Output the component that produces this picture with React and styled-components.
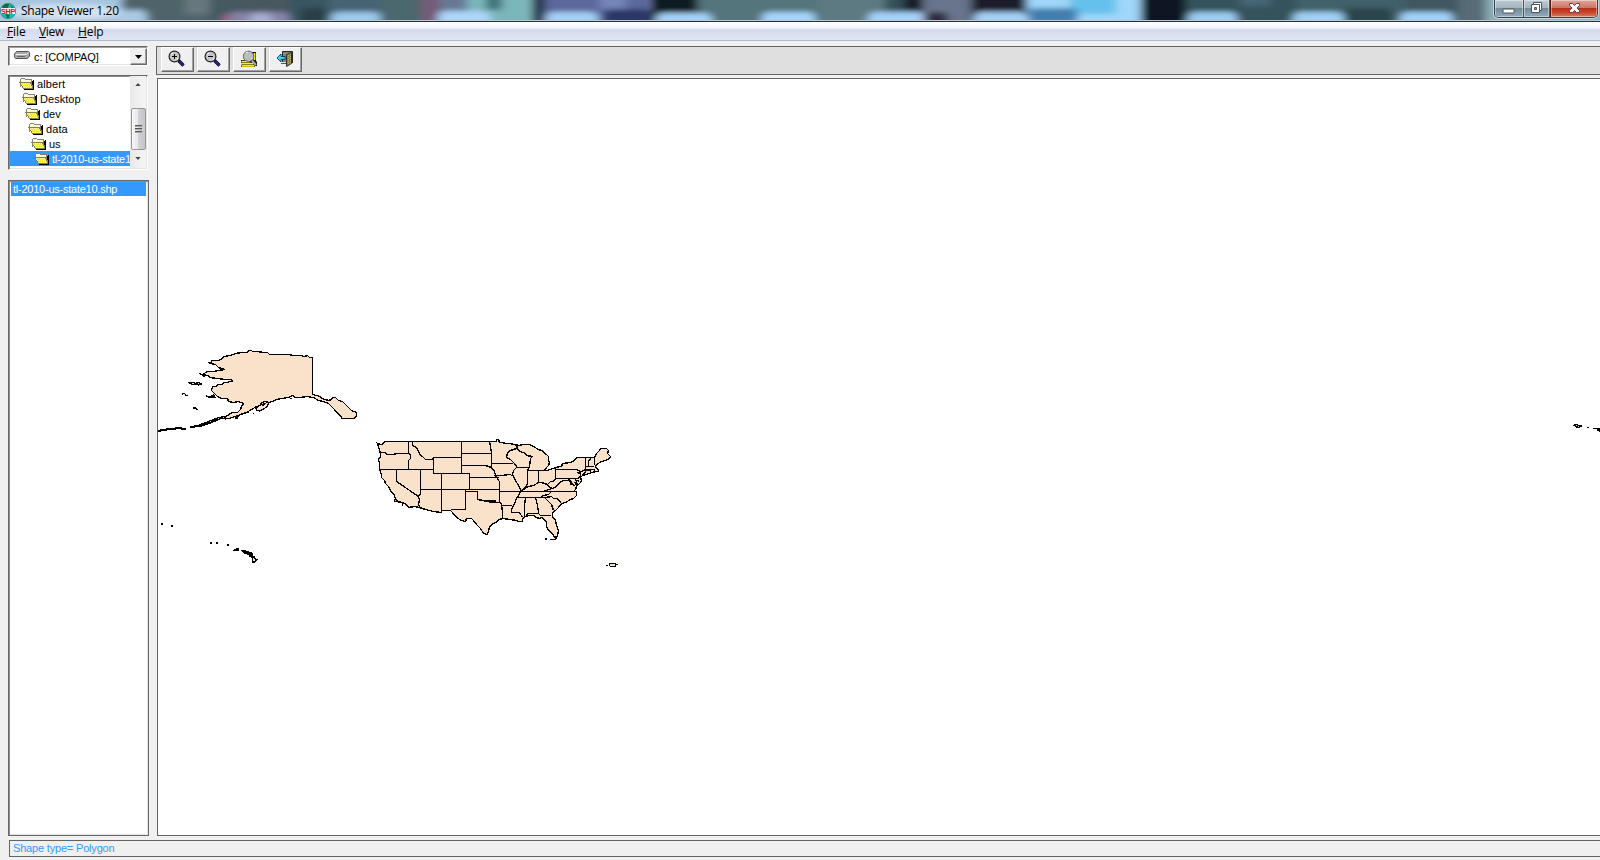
import React from "react";
import styled, { createGlobalStyle, css } from "styled-components";

const Global = createGlobalStyle`
  html, body { margin: 0; padding: 0; overflow: hidden; }
  * { box-sizing: border-box; }
`;

const Window = styled.div`
  width: 1600px;
  height: 860px;
  display: flex;
  flex-direction: column;
  overflow: hidden;
  background: #f0f0f0;
  color: #000;
  font-family: "Liberation Sans", Arial, sans-serif;
  font-size: 11px;
`;

const TitleBar = styled.header`
  position: relative;
  display: flex;
  height: 22px;
  flex: none;
  border-bottom: 1px solid #2c3038;
  box-shadow: inset 0 -1px #b9c8d6;
  background: #b9c8d6;
  overflow: hidden;
`;

const Glass = styled.svg`
  position: absolute;
  inset: 0;
  width: 1600px;
  height: 20px;
`;

const Caption = styled.div`
  position: relative;
  display: flex;
  flex: 1;
  gap: 5px;
  height: 21px;
  font: 12px/21px "Open Sans", "Noto Sans", sans-serif;
  letter-spacing: ${(p) => p.$spacing};
`;

const AppIcon = styled.svg`
  display: block;
  width: 16px;
  height: 16px;
  margin-top: 3px;
`;

const WindowControls = styled.div`
  position: relative;
  display: flex;
  width: 104px;
  height: 18px;
  margin-right: 2px;
  border: 1px solid #34404c;
  border-top: 0;
  border-radius: 0 0 5px 5px;
  box-shadow: 0 0 0 1px rgba(255, 255, 255, 0.5);
  overflow: hidden;
`;

const ControlButton = styled.button`
  display: flex;
  width: ${(p) => p.$width}px;
  height: 17px;
  padding: 0;
  align-items: center;
  justify-content: center;
  border: 0;
  border-right: 1px solid #4c5a68;
  box-shadow: inset 0 0 0 1px rgba(255, 255, 255, 0.4);
  background: linear-gradient(#bccad2 0, #a5b4bf 45%, #768b9a 50%, #93abbd 100%);
  svg { margin-top: -1px; }
  ${(p) =>
    p.$close &&
    css`
      border-right: 0;
      border-left: 1px solid #5a1712;
      background: linear-gradient(#dfa79c 0, #cd7668 45%, #b83018 50%, #c9482f 75%, #d98263 100%);
    `}
`;

const MenuBar = styled.nav`
  display: flex;
  flex: none;
  height: 19px;
  padding-left: 7px;
  border-bottom: 1px solid #b2b9cd;
  background: linear-gradient(#fff 0, #f1f4f9 6px, #e7ebf4 7px, #d4daec 7px, #dfe4f5 18px);
  font: 12px/19px "Open Sans", "Noto Sans", sans-serif;
`;

const MenuItem = styled.span`
  width: ${(p) => p.$width}px;
  letter-spacing: ${(p) => p.$spacing || 0}px;
  white-space: nowrap;
  &::first-letter { text-decoration: underline; }
`;

const Body = styled.div`
  display: flex;
  flex: none;
  height: 795px;
  padding-top: 5px;
`;

const Sidebar = styled.aside`
  display: flex;
  flex-direction: column;
  flex: none;
  width: 156px;
  padding-left: 8px;
`;

const DriveSelect = styled.div`
  display: flex;
  width: 140px;
  height: 20px;
  margin-bottom: 9px;
  background: #fff;
  border: 1px solid;
  border-color: #696969 #fff #fff #696969;
  box-shadow: inset 1px 1px #a0a0a0, inset -1px -1px #e3e3e3;
`;

const DriveLabel = styled.div`
  display: flex;
  flex: 1;
  align-items: center;
  gap: 4px;
  padding: 1px 0 0 5px;
  letter-spacing: -0.1px;
  white-space: pre;
  svg { margin-top: -3px; }
`;

const DropArrow = styled.button`
  flex: none;
  width: 17px;
  height: 17px;
  margin-top: 1px;
  padding: 0;
  border: 1px solid;
  border-color: #f4f4f4 #696969 #696969 #f4f4f4;
  box-shadow: inset -1px -1px #a0a0a0;
  background: #f0f0f0;
  svg { display: block; margin: 0 0 0 4px; }
`;

const SunkenBox = styled.div`
  display: flex;
  width: ${(p) => (p.$framed ? 141 : 140)}px;
  height: ${(p) => p.$height}px;
  margin-bottom: ${(p) => p.$gap || 0}px;
  padding: 0 1px 1px;
  background: #fff;
  border: 1px solid;
  border-color: ${(p) => (p.$framed ? "#696969" : "#696969 #fff #fff #696969")};
  box-shadow: inset 1px 1px #8c8c8c, inset -1px -1px #e3e3e3;
`;

const FolderList = styled.div`
  display: flex;
  flex-direction: column;
  flex: 1;
  min-width: 0;
  overflow: hidden;
`;

const FolderRow = styled.div`
  display: flex;
  flex: none;
  height: 15px;
  line-height: 16px;
  gap: 2px;
  padding-left: ${(p) => p.$indent}px;
  white-space: nowrap;
  letter-spacing: ${(p) => p.$spacing || 0}px;
  background: ${(p) => (p.$selected ? "#3399ff" : "transparent")};
  color: ${(p) => (p.$selected ? "#fff" : "#000")};
  svg { flex: none; margin-top: 1px; }
`;

const ScrollBar = styled.div`
  display: flex;
  flex-direction: column;
  align-items: center;
  width: 16px;
  background: linear-gradient(90deg, #e9e9e9, #f5f5f5);
`;

const ScrollArrow = styled.div`
  display: flex;
  align-items: center;
  justify-content: center;
  height: 17px;
`;

const ScrollThumb = styled.div`
  display: flex;
  flex-direction: column;
  align-items: center;
  justify-content: center;
  gap: 1px;
  width: 15px;
  height: 42px;
  margin-top: 15px;
  border: 1px solid #989898;
  border-radius: 2px;
  background: linear-gradient(90deg, #f5f5f5 0, #e9e9eb 45%, #d2d2d5 50%, #c4c4c8 100%);
`;

const Grip = styled.i`
  width: 7px;
  height: 2px;
  background: linear-gradient(#555 50%, #aaa 50%);
`;

const FileRow = styled.div`
  flex: 1;
  height: 14px;
  margin: 1px;
  line-height: 13px;
  padding-left: 1px;
  border: 1px dotted #c9702a;
  background: #3399ff;
  color: #fff;
  white-space: nowrap;
  letter-spacing: -0.24px;
`;

const Main = styled.main`
  display: flex;
  flex: 1;
  flex-direction: column;
  min-width: 0;
`;

const Toolbar = styled.div`
  display: flex;
  flex: none;
  gap: 3px;
  height: 29px;
  margin-bottom: 3px;
  padding-left: 4px;
  border: 1px solid #646464;
  border-right: 0;
  background: #dfdfdf;
`;

const ToolButton = styled.button`
  width: 33px;
  height: 25px;
  padding: 0;
  border: 1px solid;
  border-color: #fff #696969 #696969 #fff;
  box-shadow: inset -1px -1px #a0a0a0;
  background: #f0f0f0;
  svg { display: block; margin: -2px 0 0 6px; }
`;

const MapView = styled.section`
  flex: none;
  height: 758px;
  margin-left: 1px;
  border: 1px solid #646464;
  border-right: 0;
  background: #fff;
`;

const MapSvg = styled.svg`
  display: block;
  width: 1442px;
  height: 756px;
  shape-rendering: crispEdges;
`;

const StatusBar = styled.footer`
  flex: none;
  height: 17px;
  margin: 4px 0 0 9px;
  padding-left: 3px;
  border: 1px solid #646464;
  border-right: 0;
  color: #3399ff;
  line-height: 14px;
  letter-spacing: -0.18px;
`;

/* Blurred desktop showing through the glass: x, y, width, height, colour */
const glassPatches = [
  [-20, -6, 150, 40, "#a4c4e0"], [122, -6, 90, 40, "#50646b"], [115, 10, 32, 24, "#a9c9e4"],
  [185, -6, 30, 20, "#66787d"], [210, -6, 120, 40, "#465860"], [228, 12, 62, 22, "#8583a8"],
  [222, 14, 12, 20, "#936b88"], [250, 13, 22, 20, "#a9aed2"], [290, -6, 40, 40, "#385460"],
  [300, 8, 28, 26, "#2c4048"], [328, -6, 55, 40, "#456474"], [331, 12, 50, 22, "#9cc9ec"],
  [380, -6, 42, 40, "#4c686e"], [421, -6, 20, 40, "#745b78"], [440, -6, 28, 40, "#687894"],
  [467, -6, 64, 40, "#7ab6bb"], [438, 11, 52, 22, "#acd6fa"], [486, -6, 16, 16, "#3e727a"],
  [532, -6, 13, 40, "#203647"], [545, -6, 105, 40, "#5c689c"], [600, -6, 26, 16, "#7485b8"],
  [603, 9, 48, 24, "#2a3768"], [546, 12, 52, 22, "#a4d0f5"], [651, -6, 47, 40, "#101a24"],
  [698, -6, 120, 40, "#54757b"], [656, 13, 56, 22, "#a4d2f8"], [818, -6, 70, 40, "#5d7981"],
  [762, 12, 53, 22, "#a6d4fb"], [885, -6, 20, 40, "#345058"], [868, 12, 54, 22, "#a4d2fa"],
  [904, -6, 22, 18, "#181f28"], [923, -6, 48, 40, "#68748c"], [926, 12, 22, 22, "#2e2c3a"],
  [971, -6, 56, 40, "#1b1d29"], [974, 12, 53, 22, "#a4d0f5"], [1027, -6, 113, 40, "#9fd7fa"],
  [1070, -6, 46, 20, "#65c1ec"], [1028, 8, 50, 16, "#427eae"], [1141, -6, 46, 40, "#0e1821"],
  [1186, -6, 110, 40, "#35535b"], [1240, -6, 30, 12, "#466676"], [1188, 12, 49, 22, "#9ccdf2"],
  [1296, -6, 110, 40, "#40606a"], [1343, 8, 50, 26, "#2b454c"], [1293, 12, 51, 22, "#a0d0f5"],
  [1405, -6, 56, 40, "#405660"], [1400, 12, 53, 22, "#a0d1f7"], [1458, -6, 35, 40, "#586c77"],
  [1486, -6, 130, 40, "#90b0b8"],
];

const shift = (pts, dx) =>
  pts.trim().split(/\s+/).map((n, i) => (i % 2 ? n : Number(n) + dx)).join(" ");

/* Moves each coordinate to the centre of its screen pixel (three units wide) */
const snap = (d) => d.replace(/\d+/g, (n) => Math.floor(Number(n) / 3) * 3 + 1.5);

const EAST = 375;

const mainland =
  "M38 40 46 44 52 44 55 37 60 34 393 34 394 29 400 29 402 36 " +
  shift(`35 38 50 40 60 40 70 43 88 46 97 42 105 42 118 44 130 50 145 57 155 62 168 72 175 78
    175 90 178 97 175 105 170 112 167 118 160 120 170 121 180 118 197 113 215 110 217 99
    240 97 248 94 255 88 258 83 285 82 312 82 320 70 328 62 330 54 350 54 355 60 353 70
    361 78 358 86 345 90 333 95 320 103 315 108 318 115 325 117 326 125 318 124 305 127
    290 133 278 136 272 143 275 150 270 158 262 165 258 168 256 178 250 183 260 184
    259 195 250 205 240 207 225 216 215 220 205 232 195 240 188 248 187 258 195 270
    198 285 205 300 202 318 193 322 188 310 175 302 170 288 168 278 165 270 155 262
    148 266 140 262 130 255 115 255 105 258 98 264 97 275 85 275 78 270 60 268 38 265
    28 268 15 278 5 284`, EAST) +
  ` 372 293 368 312 355 310 345 295 333 283 325 270 318 265 303 266 300 274 288 272 275 262
    262 247 255 240 229 240 229 247 205 244 180 237 162 232 148 230 130 232 125 224
    118 220 100 215 90 208 88 195 75 180 70 170 60 160 58 150 50 143 48 132 42 118
    43 100 40 88 46 80 47 70 42 60 40 50Z`;

const westBorders = [
  "47 67 60 68 65 73 85 73 95 70 133 70", "131 34 131 70 137 73 135 84 131 90 131 118",
  "42 118 205 118", "143 34 143 46 153 52 160 65 165 75 173 78 180 87 203 87 205 82",
  "205 82 289 82", "205 82 205 130 313 130", "289 34 289 130", "289 70 378 70",
  "289 106 360 106 370 109 380 112", "313 130 313 178", "313 142 396 142",
  "94 118 94 154 160 200", "166 118 166 178 166 190 160 200 162 210 160 220 163 232",
  "229 130 229 240", "166 178 403 178", "301 178 301 238 258 238",
  "301 184 337 184 337 208 355 210 365 214 385 217 403 216",
  "373 34 375 50 378 70 380 100 380 112 388 125 392 137 400 150 403 155 403 216",
];

const eastBorders = [
  "5 100 70 100", "13 136 35 136 60 134 68 138", "0 142 28 142", "0 178 28 178",
  "28 184 85 184", "28 216 35 220 35 226 67 226", "35 226 38 245 38 265",
  "82 46 80 55 60 60 52 68 50 82 62 88 72 100 80 108 80 112 70 120 66 132 75 150 85 165 90 178 92 184 85 195 78 205 72 220 65 238 65 248 88 248 98 262",
  "80 111 118 111", "80 55 92 65 106 70 110 76 126 78 120 85 118 110 113 120 113 160 105 172 92 184",
  "113 121 160 121", "145 121 145 158", "100 177 115 168 130 165 145 158 155 157 172 162 180 155 190 153 195 145 197 113",
  "197 118 260 118 270 125 272 137 265 146 197 146", "172 162 175 170 188 176 200 168 212 155 222 150 235 152 245 158 252 168",
  "85 184 160 184 175 178 188 176", "160 184 257 184", "80 202 165 202",
  "150 202 160 195 175 193 185 184", "105 202 103 230 103 260", "137 202 142 225 145 245 145 250",
  "110 260 112 250 145 250 150 255 183 256", "162 202 175 213 185 224 190 240",
  "165 202 185 200 190 205 200 205 215 218", "285 82 287 95 286 125 278 135",
  "300 84 295 95 295 108", "312 82 314 105", "286 110 312 108", "286 121 312 118 312 126",
  "235 146 245 158 240 165", "257 146 262 165", "262 126 272 130",
];

const alaska = `M174 67 183 66 183 62 206 60 218 56 221 48 240 45 255 41 275 38 290 37 297 32 303 32
  306 35 322 35 340 38 352 38 357 43 400 44 415 44 430 47 450 47 462 49 473 47 479 52 487 52
  487 164 500 166 510 168 514 174 526 178 534 182 545 179 548 173 556 173 566 181 576 183 585 192
  598 204 603 210 618 218 619 227 612 235 575 235 574 228 560 218 553 209 545 199 534 190 520 184
  505 180 490 172 470 168 450 171 435 171 428 167 415 172 395 174 380 178 368 184 355 188 340 190
  330 195 318 200 305 208 290 217 270 222 255 228 235 235 222 236 210 235 200 240 185 247 165 252
  150 258 140 259 150 252 175 244 205 233 225 228 248 218 262 216 272 207 275 198 280 190 265 185
  250 188 235 184 233 175 215 175 203 169 195 162 183 150 188 140 200 138 203 133 217 132 220 128
  232 128 238 125 247 125 247 121 240 118 225 119 200 115 180 113 172 106 157 103 172 95 190 95
  205 90 222 88 205 82 195 74 180 70Z`;

const alaskaIslands = [
  "M113 127h18l4 3 12-2 8 4-9 3-10-3-9 2-5-4z", "M97 162l7-2 3 6h6", "M130 204h8l4 5h3",
  "M167 168l15 2 10-5 3 6-15 1-13-3", "M148 101l12 5 3 5", "M420 176h5",
  "M318 205l7-7 15-6 10-7 5 5-3 10-12 7-12 6-8-3z", "M330 193l12-9 12 2M336 198l12-9",
  "M296 213v5M308 221h4M252 230h16M255 234h10M223 228l5 11",
];

const aleutians = "M24 272h8l2-3h14l2-2h25l2-2h16l2 1h12M120 262l12-1 3-2 12-1 6-4 8 2 5-6 9-3 6 2 7-6 15-5";

const hawaii = ["M34 42h4M64 48h4M181 99h5", "M197 100h6M231 106h6", "M250 123l4-3h5l2-4h5v5h-7",
  "M278 123h8v5h5v-3h5v4h7l4 4v5h-6v-4h-7v-4h-7l-5-3z", "M306 140h5l3 6 7 3-6 5-3 3h-4v-9z"];

const land = { fill: "#fae1ca", stroke: "#000", strokeWidth: 3 };

function MapDrawing() {
  return (
    <MapSvg viewBox="158 79 1442 756">
      <g transform="translate(150 340) scale(.333333)" {...land} strokeWidth="4">
        <path d={snap(alaska)} />
        {alaskaIslands.map((d) => <path key={d} d={d} />)}
        <path d={aleutians} fill="none" strokeWidth="6" />
      </g>
      <g transform="translate(365 430) scale(.333333)" {...land} strokeWidth="4">
        <path d={snap(mainland)} />
        {westBorders.map((p) => <polyline key={p} points={snap(p)} fill="none" />)}
        {eastBorders.map((p) => <polyline key={p} points={snap(shift(p, EAST))} fill="none" />)}
        <path d="M88 208v6h8M98 218h16M112 222v7M362 213h32" />
        <path d="M540 328h5M555 329h14l7-6" fill="none" strokeWidth="5" />
        <path d="M648 126l9-6h20v8M638 150l5 5M628 155l8 14" fill="none" />
        <path d="M724 406h5M734.500 400.500h18v9h-18zM753 405h6" strokeWidth="3" />
      </g>
      <g transform="translate(150 510) scale(.333333)" {...land}>
        <path d={hawaii[0]} strokeWidth="6" />
        {hawaii.slice(1).map((d) => <path key={d} d={d} strokeWidth="5" />)}
      </g>
      <g transform="translate(1540 410) scale(.333333)" {...land}>
        <path d="M99 46h6v-3h8v3h12v4h-6v3h-8v-3h-6M141 52h6M159 56h21M170 60h10v6" strokeWidth="4" />
      </g>
    </MapSvg>
  );
}

const Folder = () => (
  <svg width="16" height="13" shapeRendering="crispEdges">
    <path d="M2 4h12v9H5z" fill="#000" />
    <path d="M1.500 9.500v-7l1-1h3l1 1h6v3" fill="#fffbd0" stroke="#808080" />
    <path d="M.5 5.500h11l3 6h-10z" fill="#f4e842" stroke="#858047" />
    <path d="M2 6.500h9M3 8.500h9M5 10.500h8" stroke="#fff7a0" strokeDasharray="1 1" />
    <path d="M14.500 3v9M5 12.500h10" stroke="#000" />
  </svg>
);

const Drive = () => (
  <svg width="16" height="10">
    <path d="M.5 4l2-2.500h12l1 1v3.500l-2 2.500h-12l-1-1z" fill="#aaa" stroke="#555" />
    <path d="M1.500 4.500h11l2-2" fill="none" stroke="#eee" />
    <path d="M3 6.500h8" stroke="#666" /><path d="M11 5.500h1.500" stroke="#2d2" />
  </svg>
);

const Zoom = ({ plus }) => (
  <svg width="18" height="18">
    <path d="M10.500 10.500l5 5" stroke="#000" strokeWidth="3.200" />
    <path d="M11 11l4.500 4.500" stroke="#23239c" strokeWidth="2.200" />
    <circle cx="6.500" cy="6.500" r="5.400" fill="#c4c4c4" stroke="#222" strokeWidth="1.200" />
    <path d="M3 4l2-1M9 10l1-2" stroke="#fff" />
    <path d={plus ? "M4 6.500h5M6.500 4v5" : "M4 6.500h5"} stroke="#000" />
  </svg>
);

const FullExtent = () => (
  <svg width="18" height="18">
    <path d="M1 10h3V9h8V2h4v9l1 1v4h-2v1H1v-2l1-1-1-2z" fill="#111" />
    <path d="M1.500 11.500h8M1.500 13.700h12M1.500 15.900h13M14.500 3v7" stroke="#fff200" strokeWidth="1.700" />
    <circle cx="8.500" cy="6.300" r="5.200" fill="#bcbcbc" stroke="#666" />
    <path d="M6 3l2-1M12 8v1" stroke="#fff" /><path d="M12 10.500l4 4.500" stroke="#aaa" strokeWidth="2" />
  </svg>
);

const Exit = () => (
  <svg width="18" height="18">
    <path d="M6.500 12V1.500h10V13" fill="#888" stroke="#222" />
    <path d="M10.500 4.500l5-2v11l-5 3z" fill="#8a863e" stroke="#333" />
    <path d="M12.500 5v9M14.500 4v9" stroke="#b5b078" strokeDasharray="1 1" />
    <path d="M1 8l4-4v2.500h4v3H5V12z" fill="#38dce5" stroke="#124" strokeWidth=".8" />
    <path d="M5 13.500h5" stroke="#555" />
  </svg>
);

const Triangle = ({ up, small }) => (
  <svg width={small ? 6 : 7} height={small ? 3 : 4} viewBox="0 0 7 4">
    <path d={up ? "M0 4l3.500-4L7 4z" : "M0 0h7L3.500 4z"} fill={small ? "#444" : "#000"} />
  </svg>
);

const LogoText = styled.text`
  font: bold 8px "Liberation Sans", sans-serif;
`;

const folders = [
  ["albert", 9, 0.1], ["Desktop", 12, 0.05], ["dev", 15, 0], ["data", 18, 0.1], ["us", 21, 0],
];

export default function App() {
  return (
    <>
      <Global />
      <Window>
        <TitleBar>
          <Glass>
            <defs>
              <filter id="soft" filterUnits="userSpaceOnUse" x="-40" y="-20" width="1680" height="70">
                <feGaussianBlur stdDeviation="5 2.400" />
              </filter>
            </defs>
            <g filter="url(#soft)">
              {glassPatches.map(([x, y, w, h, c], i) => (
                <rect key={i} x={x} y={y} width={w} height={h} rx={y > 0 ? 6 : 0} fill={c} />
              ))}
              <ellipse cx="65" cy="12" rx="55" ry="8" fill="#d4e1ed" />
            </g>
          </Glass>
          <Caption $spacing="-0.28px">
            <AppIcon viewBox="0 0 16 16">
              <circle cx="8" cy="8" r="7.700" fill="#16bdb9" stroke="#28706f" strokeWidth=".6" />
              <path d="M5 1l4 0-1 4-4 1-2-2zM10 2l4 3-2 1zM5 11l5 1-2 4z" fill="#146b38" />
              <path d="M1 5h14v6H1z" fill="#f7efed" />
              <LogoText x="1" y="11" fill="#e01018" textLength="14" lengthAdjust="spacingAndGlyphs">SHP</LogoText>
            </AppIcon>
            <span>Shape Viewer 1.20</span>
          </Caption>
          <WindowControls>
            <ControlButton $width={29} aria-label="Minimize">
              <svg width="13" height="17"><rect x="1" y="9" width="11" height="4" rx=".5" fill="#fff" stroke="#4a5462" /></svg>
            </ControlButton>
            <ControlButton $width={27} aria-label="Restore">
              <svg width="13" height="17">
                <path d="M3.500 2.500h8v8h-8z" fill="#fff" stroke="#4a5462" />
                <path d="M1.500 4.500h8v8h-8z" fill="#fff" stroke="#4a5462" />
                <path d="M4.500 7.500h2v2h-2z" fill="#8ca0b0" stroke="#4a5462" />
              </svg>
            </ControlButton>
            <ControlButton $width={47} $close aria-label="Close">
              <svg width="13" height="17">
                <path d="M1.500 3.500h3l2 2 2-2h3v2L9 8l2.500 2.500v2h-3l-2-2-2 2h-3v-2L4 8 1.500 5.500z" fill="#fff" stroke="#584552" />
              </svg>
            </ControlButton>
          </WindowControls>
        </TitleBar>
        <MenuBar>
          <MenuItem $width={32} $spacing={-0.1}>File</MenuItem>
          <MenuItem $width={39} $spacing={-0.3}>View</MenuItem>
          <MenuItem $width={40} $spacing={-0.1}>Help</MenuItem>
        </MenuBar>
        <Body>
          <Sidebar>
            <DriveSelect>
              <DriveLabel><Drive />c: [COMPAQ]</DriveLabel>
              <DropArrow aria-label="Choose drive"><Triangle /></DropArrow>
            </DriveSelect>
            <SunkenBox $height={95} $gap={10}>
              <FolderList>
                {folders.map(([name, indent, spacing]) => (
                  <FolderRow key={name} $indent={indent} $spacing={spacing}><Folder />{name}</FolderRow>
                ))}
                <FolderRow $indent={24} $spacing={-0.22} $selected><Folder />tl-2010-us-state1</FolderRow>
              </FolderList>
              <ScrollBar>
                <ScrollArrow><Triangle up small /></ScrollArrow>
                <ScrollThumb><Grip /><Grip /><Grip /></ScrollThumb>
                <ScrollArrow><Triangle small /></ScrollArrow>
              </ScrollBar>
            </SunkenBox>
            <SunkenBox $height={656} $framed>
              <FileRow>tl-2010-us-state10.shp</FileRow>
            </SunkenBox>
          </Sidebar>
          <Main>
            <Toolbar>
              <ToolButton aria-label="Zoom in"><Zoom plus /></ToolButton>
              <ToolButton aria-label="Zoom out"><Zoom /></ToolButton>
              <ToolButton aria-label="Full extent"><FullExtent /></ToolButton>
              <ToolButton aria-label="Exit"><Exit /></ToolButton>
            </Toolbar>
            <MapView><MapDrawing /></MapView>
          </Main>
        </Body>
        <StatusBar>Shape type= Polygon</StatusBar>
      </Window>
    </>
  );
}
